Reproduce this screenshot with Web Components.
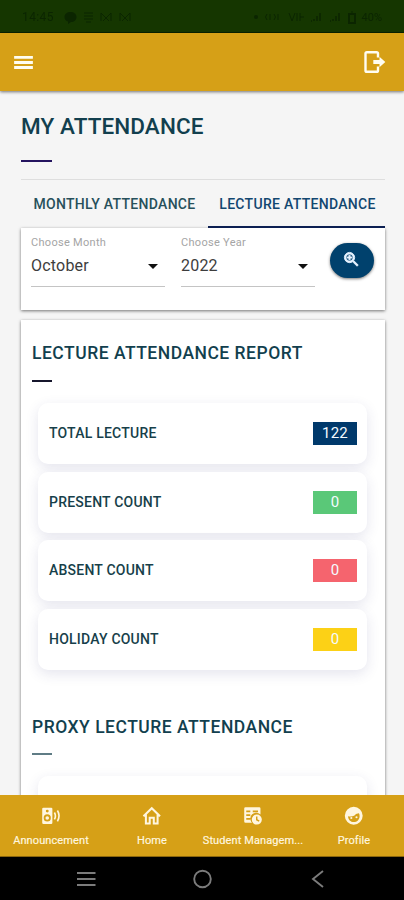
<!DOCTYPE html>
<html lang="en"><head><meta charset="utf-8"><title>My Attendance</title>
<style>
body{margin:0;background:#f5f5f5;font-family:Roboto,"Liberation Sans",sans-serif;overflow:hidden}
</style></head><body>
<attendance-app></attendance-app>
<script>
const define=(name,html,init)=>{
  const t=document.createElement('template');t.innerHTML=html;
  customElements.define(name,class extends HTMLElement{
    constructor(){super();this.attachShadow({mode:'open'}).append(t.content.cloneNode(true));}
    connectedCallback(){if(init)init(this,this.shadowRoot);}
  });
};
const icons={
 menu:'<path d="M3 18.2h18v-2.8H3zm0-4.800h18v-2.800H3zm0-7.700v2.800h18V5.700z"/>',
 exit:'<path d="M16 7.500V3.600Q16 2.200 14.600 2.200H4.900Q3.500 2.200 3.500 3.600v16.800q0 1.400 1.400 1.400h9.700q1.400 0 1.400-1.400V16.500" fill="none" stroke="currentColor" stroke-width="2.400"/><path d="M11.300 9.900h6.200V6.800l5.800 5.200-5.800 5.200v-3.100h-6.200z"/>',
 zoom:'<path d="M15.500 14h-.79l-.28-.27C15.410 12.590 16 11.110 16 9.500 16 5.910 13.090 3 9.500 3S3 5.910 3 9.500 5.910 16 9.500 16c1.610 0 3.090-.59 4.230-1.570l.27.28v.79l5 4.990L20.490 19zm-6 0C7.010 14 5 11.990 5 9.500S7.010 5 9.500 5 14 7.010 14 9.500 11.990 14 9.500 14zM12.500 10.200h-2.200v2.200H8.700v-2.200H6.500V8.800h2.200V6.600h1.600v2.200h2.200z" stroke="currentColor" stroke-width="1.100"/>',
 speaker:'<path fill-rule="evenodd" d="M3 2h9.500q1.500 0 1.500 1.500v17q0 1.500-1.500 1.500H3q-1.500 0-1.500-1.500v-17Q1.500 2 3 2zm4.700 2.500a1.800 1.800 0 1 0 0 3.600 1.800 1.800 0 0 0 0-3.600zm0 5.800a4.400 4.400 0 1 0 0 8.800 4.400 4.400 0 0 0 0-8.800zm0 2.200a2.200 2.200 0 1 1 0 4.400 2.200 2.200 0 0 1 0-4.400z"/><path d="M16.500 8q2.500 4.200 0 8.500M20.200 5.500q4 6.500 0 13.500" fill="none" stroke="currentColor" stroke-width="2"/>',
 home:'<path d="M1.800 12.500 12 2.800l10.200 9.700M4.800 10v11.500h4.700v-7h5v7h4.700V10" fill="none" stroke="currentColor" stroke-width="2.500"/>',
 table:'<path fill-rule="evenodd" d="M3 1.500h17q1.500 0 1.500 1.500v7.500A7 7 0 0 0 11 20.500H3Q1.500 20.500 1.500 19V3Q1.500 1.500 3 1.500zm1 4v2.200h5V5.500zm8 0v2.200h6.500V5.500zM4 10v2.200h5V10zm0 4.700v2.200h5v-2.200z"/><path fill-rule="evenodd" d="M17 10.500a6.200 6.200 0 1 1 0 12.400 6.200 6.200 0 0 1 0-12.400zm-1 2.500v4.400l3.400 2 1-1.500-2.600-1.500V13z"/>',
 face:'<path fill-rule="evenodd" d="M12 1a11 11 0 1 1 0 22 11 11 0 0 1 0-22zM5 12.500c0 4 3 7.200 7 7.200s7.200-3 7.200-7.200q0-2-.8-3.500l-3.800.8c-1 2.600-5.200 3.800-9.600 2.700z"/><circle cx="9" cy="14.800" r="1.300"/><circle cx="15.400" cy="13.800" r="1.300"/>'
};
define('app-icon',`<style>:host{display:block;width:var(--s,22px);height:var(--s,22px);flex:none}svg{display:block;width:100%;height:100%;fill:currentColor}</style><svg viewBox="0 0 24 24" aria-hidden="true"></svg>`,
 (h,r)=>{r.querySelector('svg').innerHTML=icons[h.getAttribute('name')];});

define('status-bar',`<style>:host{display:flex;box-sizing:border-box;height:33px;padding:2px 22px 0;align-items:center;justify-content:space-between;background:#153600;border-bottom:1.500px solid #082300;color:#0b2500;font-size:12px;filter:blur(.4px)}
div{display:flex;align-items:center;gap:6px}svg{display:block;fill:currentColor;stroke:currentColor}.t{letter-spacing:.4px;margin-right:4px}.p{font-size:11px}</style>
<div><span class="t">14:45</span><svg width="13" height="13" viewBox="0 0 13 13"><path stroke="none" d="M6.500 1C10 1 12.500 3 12.500 6s-2.500 5-5.500 5l-3 2v-2.500C2 10 .5 8.500.5 6 .5 3 3 1 6.500 1z"/></svg>
<svg width="11" height="12" viewBox="0 0 11 12"><path fill="none" d="M1 2h9M1 5h9M1 8h9M3 11h5"/></svg><svg width="13" height="12" viewBox="0 0 13 12"><path fill="none" d="M1 10V2l5 5 5-5v8M3 10l3-3 3 3"/></svg><svg width="13" height="12" viewBox="0 0 13 12"><path fill="none" d="M1 10V2l5 5 5-5v8M3 10l3-3 3 3"/></svg></div>
<div><svg width="6" height="6"><circle cx="3" cy="3" r="2" stroke="none"/></svg><svg width="17" height="12"><path fill="none" d="M2 3q-3 3 0 6M5 3v6M9 3q3 3 0 6M13 3v6"/></svg><svg width="16" height="12"><path fill="none" d="M1 2l3 8 3-8M9 2v8M12 2v8M12 6h4"/></svg><svg width="13" height="12"><path d="M1 10h1M4 10V8M7 10V5M10 10V2" stroke-width="1.500"/></svg><svg width="13" height="12"><path d="M1 10h1M4 10V8M7 10V5M10 10V2" stroke-width="1.500"/></svg><svg width="8" height="13"><rect x="1" y="3" width="6" height="9" fill="none" stroke-width="2"/><path d="M3 1h2"/></svg><span class="p">40%</span></div>`);

define('app-bar',`<style>:host{display:flex;box-sizing:border-box;height:58px;padding:0 18px 0 11px;align-items:center;justify-content:space-between;background:#d6a017;color:#fffdf2;box-shadow:0 1px 3px #0008;position:relative}</style><slot></slot>`);

define('section-title',`<style>:host{display:block;color:#123f4e;font-weight:500}h2{margin:0;font:inherit;font-size:var(--fs,17.500px);line-height:24px;letter-spacing:var(--ls,0);white-space:nowrap}i{display:block;width:var(--w,20px);height:2px;margin-top:var(--gap,15px);background:var(--bar,#16162c)}</style><h2><slot></slot></h2><i></i>`);

define('tab-strip',`<style>:host{display:grid;grid-template-columns:187px 177px;height:49px;border-top:1px solid #dedede;box-sizing:border-box}::slotted(*){display:flex;align-items:center;justify-content:center;font-size:14px;font-weight:500;letter-spacing:.3px;color:#27505b;box-sizing:border-box;padding-top:2px;white-space:nowrap;border-bottom:2px solid transparent}::slotted([selected]){color:#124770;border-bottom-color:#0c1f52;padding-left:2px}</style><slot></slot>`);

define('panel-card',`<style>:host{display:block;box-sizing:border-box;background:#fff;box-shadow:0 1px 3px #0008}</style><slot></slot>`);

define('select-field',`<style>:host{display:block;width:134px;box-sizing:border-box;height:52px;border-bottom:1px solid #c4c4c4}small{display:block;font-size:11px;line-height:13px;padding-top:1px;color:#a5a5a5;letter-spacing:.3px;white-space:nowrap}div{display:flex;align-items:center;justify-content:space-between;margin-top:7px;padding-right:7px;font-size:16px;letter-spacing:.2px;line-height:20px;color:#3d3d3d}b{border:5px solid transparent;border-top-color:#111;border-bottom:0}</style><small></small><div><span></span><b></b></div>`,
 (h,r)=>{r.querySelector('small').textContent=h.getAttribute('label');r.querySelector('span').textContent=h.getAttribute('value');});

define('search-button',`<style>:host{display:flex;width:44px;height:35px;border-radius:18px;background:#00416d;color:#e6f2ff;align-items:center;justify-content:center;box-shadow:0 1px 3px #0008;box-sizing:border-box;padding:0 1px 3px 0}app-icon{--s:19px}</style><app-icon name="zoom"></app-icon>`);

define('count-row',`<style>:host{display:flex;box-sizing:border-box;height:61px;padding:0 10px 0 11px;align-items:center;justify-content:space-between;background:#fff;border-radius:10px;box-shadow:0 4px 13px #32327520;font-size:14px;font-weight:500;color:#173f4a;letter-spacing:.22px}span{margin-top:-1px}b{display:block;width:44px;height:23px;line-height:22px;text-align:center;color:#f4fbff;font-size:15px;letter-spacing:.2px;font-weight:400;background:var(--c)}</style><span></span><b></b>`,
 (h,r)=>{const b=r.querySelector('b');if(!h.hasAttribute('label')){b.remove();return;}r.querySelector('span').textContent=h.getAttribute('label');b.textContent=h.getAttribute('value');b.style.setProperty('--c',h.getAttribute('color'));});

define('nav-item',`<style>:host{display:flex;flex-direction:column;align-items:center;color:#fff6df;font-size:11px;line-height:14px;padding:11px 0 0 1px;min-width:0}app-icon{--s:19.500px}span{margin-top:8px;white-space:nowrap;letter-spacing:.1px;-webkit-text-stroke:.2px}</style><app-icon></app-icon><span><slot></slot></span>`,
 (h,r)=>{const o=r.querySelector('app-icon'),n=document.createElement('app-icon');n.setAttribute('name',h.getAttribute('icon'));o.replaceWith(n);});
define('bottom-nav',`<style>:host{display:grid;grid-template-columns:repeat(4,101px);height:62px;background:#d6a017;border-bottom:1px solid #8b660d;box-sizing:border-box;position:relative}</style><slot></slot>`);

define('system-nav',`<style>:host{display:grid;grid-template-columns:repeat(3,116px);justify-content:center;height:43px;padding-top:1px;box-sizing:border-box;background:#000}svg{display:block;fill:none;stroke:#7c7c7c;stroke-width:1.900;width:30px;height:30px;align-self:center;justify-self:center}</style>
<svg viewBox="0 0 30 30"><path d="M6 9h18.500M6 15h18.500M6 21h18.500"/></svg><svg viewBox="0 0 30 30"><circle cx="15.500" cy="15" r="8.300"/></svg><svg viewBox="0 0 30 30"><path d="M20 7l-10 8 10 8"/></svg>`);

define('attendance-app',`<style>
:host{display:flex;flex-direction:column;height:900px;width:404px;background:#f5f5f5;overflow:hidden}
main{flex:1;min-height:0;overflow:hidden;padding:0 19px 0 21px}
.title{--fs:22.500px;--ls:.1px;--w:31px;--gap:22px;--bar:#24145f;padding-top:23px;margin-bottom:17px}
.filters{display:flex;height:82px;padding:7px 0 0 10px}
select-field+select-field{margin-left:16px}
search-button{margin:8px 0 0 15px}
.report{margin-top:10px;padding:21px 18px 0 17px;height:560px}
.report section-title{margin-left:-6px;--ls:.5px}
.rows{display:grid;gap:7.500px;margin-top:21px}
.proxy{margin-top:45px;--bar:#5f7c85;--gap:14px}
</style>
<status-bar></status-bar>
<app-bar><app-icon name="menu" style="--s:25px"></app-icon><app-icon name="exit" style="--s:24px"></app-icon></app-bar>
<main>
<section-title class="title">MY ATTENDANCE</section-title>
<tab-strip><span>MONTHLY ATTENDANCE</span><span selected>LECTURE ATTENDANCE</span></tab-strip>
<panel-card class="filters"><select-field label="Choose Month" value="October"></select-field><select-field label="Choose Year" value="2022"></select-field><search-button></search-button></panel-card>
<panel-card class="report"><section-title>LECTURE ATTENDANCE REPORT</section-title>
<div class="rows"><count-row label="TOTAL LECTURE" value="122" color="#00396b"></count-row><count-row label="PRESENT COUNT" value="0" color="#5ac878"></count-row><count-row label="ABSENT COUNT" value="0" color="#f5646e"></count-row><count-row label="HOLIDAY COUNT" value="0" color="#fcd116"></count-row></div>
<section-title class="proxy">PROXY LECTURE ATTENDANCE</section-title>
<div class="rows"><count-row></count-row></div>
</panel-card></main>
<bottom-nav><nav-item icon="speaker">Announcement</nav-item><nav-item icon="home">Home</nav-item><nav-item icon="table">Student Managem...</nav-item><nav-item icon="face">Profile</nav-item></bottom-nav>
<system-nav></system-nav>`);
</script></body></html>
